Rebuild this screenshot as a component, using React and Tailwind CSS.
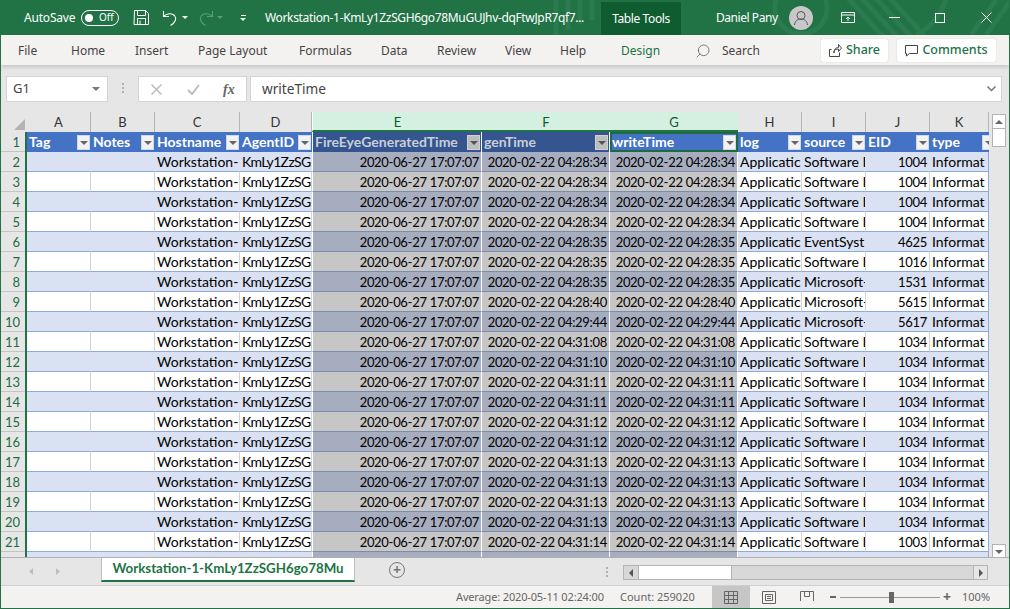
import { Search } from "lucide-react";

const uiFont = "font-['Noto_Sans',sans-serif]";
const cellFont = "font-['Lato',sans-serif]";

// fit squeezes digit-heavy columns, Lato's figures are wider than the sheet font
const cols = [
  { key: "A", name: "Tag", w: "w-[64px]" },
  { key: "B", name: "Notes", w: "w-[64px]" },
  { key: "C", name: "Hostname", w: "w-[85px]" },
  { key: "D", name: "AgentID", w: "w-[72px]", fit: "text-[14px] tracking-[-0.65px]" },
  { key: "E", name: "FireEyeGeneratedTime", w: "w-[170px] border-l border-l-white", sel: true, fit: "text-[13px] tracking-[-0.3px]" },
  { key: "F", name: "genTime", w: "w-[128px]", sel: true, fit: "text-[13px] tracking-[-0.3px]" },
  { key: "G", name: "writeTime", w: "w-[128px]", sel: true, active: true, fit: "text-[13px] tracking-[-0.3px]" },
  { key: "H", name: "log", w: "w-[64px]" },
  { key: "I", name: "source", w: "w-[64px]" },
  { key: "J", name: "EID", w: "w-[64px]", fit: "text-[13px] tracking-[-0.3px]" },
  { key: "K", name: "type", w: "w-[59px]" },
];

const times = ["04:28:34", "04:28:34", "04:28:34", "04:28:34", "04:28:35", "04:28:35", "04:28:35", "04:28:40", "04:29:44", "04:31:08", "04:31:10", "04:31:11", "04:31:11", "04:31:12", "04:31:12", "04:31:13", "04:31:13", "04:31:13", "04:31:13", "04:31:14", "04:31:14"];
const sources = ["Software I", "Software I", "Software I", "Software I", "EventSyst", "Software I", "Microsoft-", "Microsoft-", "Microsoft-", "Software I", "Software I", "Software I", "Software I", "Software I", "Software I", "Software I", "Software I", "Software I", "Software I", "Software I", "Software I"];
const eids = [1004, 1004, 1004, 1004, 4625, 1016, 1531, 5615, 5617, 1034, 1034, 1034, 1034, 1034, 1034, 1034, 1034, 1034, 1034, 1003, 1003];

const tabs = [
  { label: "File", cls: "ml-[17px] w-[53px]" },
  { label: "Home", cls: "w-[64px]" },
  { label: "Insert", cls: "w-[63px]" },
  { label: "Page Layout", cls: "w-[101px]" },
  { label: "Formulas", cls: "w-[82px]" },
  { label: "Data", cls: "w-[56px]" },
  { label: "Review", cls: "w-[68px]" },
  { label: "View", cls: "w-[55px]" },
  { label: "Help", cls: "w-[61px]" },
  { label: "Design", cls: "w-[77px] text-[#217346]" },
];

function FilterBtn({ dim, clip }) {
  return (
    <span className={`absolute top-[3px] flex h-[15px] w-[13px] items-center justify-center border ${clip ? "right-[-6px]" : "right-[1px]"} ${dim ? "border-[#d0d0d0] bg-[#bdbdbd]" : "border-[#d0d7e5] bg-[#f2f2f2]"}`}>
      <span className={`h-0 w-0 border-x-[4px] border-t-[4px] border-x-transparent ${dim ? "border-t-[#555]" : "border-t-[#666]"}`} />
    </span>
  );
}

function HeaderRow() {
  return (
    <div className="flex h-[20px]">
      {cols.map((c) => (
        <div
          key={c.key}
          className={`relative ${c.w} shrink-0 overflow-hidden pl-[2px] text-[14px] leading-[20px] font-bold ${c.sel ? "border-r border-white" : ""} ${c.active ? "bg-[#4472c4] text-white outline-2 -outline-offset-2 outline-[#1f6b3f]" : c.sel ? "bg-[#34558f] text-[#c9cdd6]" : "bg-[#4472c4] text-white"}`}
        >
          {c.name}
          <FilterBtn dim={c.sel && !c.active} clip={c.key === "K"} />
        </div>
      ))}
    </div>
  );
}

function DataRow({ i }) {
  const band = i % 2 === 0;
  const date = "2020-02-22 " + times[i];
  const values = ["", "", "Workstation-", "KmLy1ZzSG", "2020-06-27 17:07:07", date, date, "Applicatic", sources[i], eids[i], "Informat"];
  return (
    <div className="flex h-[20px]">
      {cols.map((c, n) => {
        const right = c.sel || c.key === "J";
        let cell = band ? "bg-[#d9e1f2] border-b-[#8ea9db] border-r-transparent" : "bg-white border-b-[#8ea9db] border-r-[#d4d4d4]";
        if (c.sel) cell = `${band ? "bg-[#a6adbf]" : "bg-[#c6c6c6]"} border-b-[#7c8cab] border-r-white`;
        if (c.key === "K") cell = `${band ? "bg-[#d9e1f2]" : "bg-white"} border-b-[#8ea9db] border-r-[#8ea9db]`;
        return (
          <div
            key={c.key}
            className={`${c.w} shrink-0 overflow-hidden whitespace-nowrap border-r border-b px-[2px] leading-[20px] text-black ${cell} ${c.fit || "text-[14px]"} ${right ? "text-right" : "text-left"}`}
          >
            {values[n]}
          </div>
        );
      })}
    </div>
  );
}

function Sheet() {
  return (
    <div className="relative flex h-[445px] overflow-hidden">
      <div className="flex w-[991px] flex-col">
        <div className={`flex h-[20px] shrink-0 ${cellFont} text-[13px] leading-[20px] text-[#333]`}>
          <div className="relative w-[26px] shrink-0">
            <span className="absolute right-[2px] bottom-[2px] h-0 w-0 border-b-[11px] border-l-[11px] border-b-[#b4b4b4] border-l-transparent" />
          </div>
          {cols.map((c) => (
            <div
              key={c.key}
              className={`${c.w} shrink-0 text-center ${c.sel ? "border-b-2 border-[#217346] bg-[#d3f0e0] text-[#0f5c30]" : "border-r border-[#b6b6b6]"}`}
            >
              {c.key}
            </div>
          ))}
        </div>
        <div className="flex">
          <div className={`w-[26px] shrink-0 border-r-2 border-[#217346] ${cellFont} text-[13px] leading-[20px] text-[#1e6b42]`}>
            {Array.from({ length: 22 }, (_, i) => (
              <div key={i} className="h-[20px] border-b border-[#c4c4c4] pr-[5px] text-right">
                {i + 1}
              </div>
            ))}
          </div>
          <div className={`${cellFont} relative flex flex-col`}>
            <HeaderRow />
            {times.map((_, i) => (
              <DataRow key={i} i={i} />
            ))}
          </div>
        </div>
      </div>
      <div className="flex w-[14px] shrink-0 flex-col pt-[2px]">
        <div className="flex h-[15px] items-center justify-center border border-[#b4b4b4] bg-white">
          <span className="h-0 w-0 border-x-[4px] border-b-[4px] border-x-transparent border-b-[#666]" />
        </div>
        <div className="h-[18px] border-x border-b border-[#b4b4b4] bg-white" />
        <div className="flex-1" />
        <div className="mb-[-2px] flex h-[15px] items-center justify-center border border-[#b4b4b4] bg-white">
          <span className="h-0 w-0 border-x-[4px] border-t-[4px] border-x-transparent border-t-[#666]" />
        </div>
      </div>
    </div>
  );
}

function TitleBar() {
  return (
    <div className={`relative flex h-[35px] shrink-0 items-center overflow-hidden bg-[#217346] ${uiFont} text-[12px] text-white`}>
      <svg className="absolute top-0 left-[545px]" width="465" height="35" viewBox="0 0 465 35" fill="none" stroke="#2b7a50" strokeWidth="5">
        <path d="M10 0v35M22 0v30M34 0v24M46 0v20" />
        <circle cx="255" cy="8" r="26" />
        <path d="M300 -4l40 44M314 -4l40 44M328 -4l40 44M342 -4l40 44" />
        <path d="M400 0c-6 16 -16 28 -30 35" />
        <path d="M425 35l25 -35M440 35l25 -35" />
      </svg>
      <span className="relative ml-[23px] w-[52px] tracking-[-0.200px]">AutoSave</span>
      <div className="relative ml-[5px] flex h-[16px] w-[38px] items-center rounded-full border border-white pl-[3px] text-[10px]">
        <span className="h-[8px] w-[8px] rounded-full bg-white" />
        <span className="ml-[6px]">Off</span>
      </div>
      <svg className="relative ml-[14px]" width="17" height="17" viewBox="0 0 17 17" fill="none" stroke="white" strokeWidth="1">
        <path d="M1.5 1.5h11l3 3v11h-14.500z" />
        <path d="M4.500 1.500v5h8v-5M4.500 15.500v-6h8v6M7 11.500v4" />
      </svg>
      <svg className="relative ml-[12px]" width="16" height="18" viewBox="0 0 16 18" fill="none" stroke="white" strokeWidth="1.100">
        <path d="M1.500 2v5.500h5.500M1.500 7.500c3 -3 8 -4 11 -1c2.500 3 1 7 -4 10" />
      </svg>
      <span className="relative ml-[4px] h-0 w-0 border-x-[3px] border-t-[3px] border-x-transparent border-t-white" />
      <svg className="relative ml-[10px]" width="16" height="18" viewBox="0 0 16 18" fill="none" stroke="#5b9c7b" strokeWidth="1.100">
        <path d="M14.500 2v5.500h-5.500M14.500 7.500c-3 -3 -8 -4 -11 -1c-2.500 3 -1 7 4 10" />
      </svg>
      <span className="relative ml-[3px] h-0 w-0 border-x-[3px] border-t-[3px] border-x-transparent border-t-[#5b9c7b]" />
      <div className="relative ml-[17px] flex w-[6px] flex-col items-center gap-[2px]">
        <span className="h-px w-[5px] bg-white" />
        <span className="h-0 w-0 border-x-[3px] border-t-[3px] border-x-transparent border-t-white" />
      </div>
      <span className="relative ml-[19px] w-[336px] tracking-[-0.350px] whitespace-nowrap">Workstation-1-KmLy1ZzSGH6go78MuGUJhv-dqFtwJpR7qf7...</span>
      <div className="relative mt-[2px] flex h-[33px] w-[80px] items-center justify-center bg-[#0f5c30] tracking-[-0.400px]">Table Tools</div>
      <span className="relative ml-[35px] w-[62px] tracking-[-0.450px] whitespace-nowrap">Daniel Pany</span>
      <div className="relative ml-[11px] flex h-[24px] w-[24px] items-center justify-center rounded-full bg-[#c8c8c8]">
        <svg width="16" height="16" viewBox="0 0 16 16" fill="none" stroke="#555" strokeWidth="1">
          <circle cx="8" cy="5.500" r="4" />
          <path d="M1.500 15c.5 -4 3 -6 6.500 -6s6 2 6.500 6" />
        </svg>
      </div>
      <svg className="relative ml-[28px]" width="14" height="12" viewBox="0 0 14 12" fill="none" stroke="white">
        <path d="M.500 .500h13v10h-13zM.500 3h13M7 9v-4M5 7l2 -2l2 2" />
      </svg>
      <span className="relative ml-[34px] h-px w-[11px] bg-white" />
      <span className="relative ml-[35px] h-[10px] w-[10px] border border-white" />
      <svg className="relative ml-[36px]" width="11" height="11" viewBox="0 0 11 11" stroke="white">
        <path d="M.500 .500l10 10M10.500 .500l-10 10" />
      </svg>
    </div>
  );
}

function Ribbon() {
  return (
    <div className={`flex h-[30px] shrink-0 items-center bg-[#f3f2f1] pt-[1px] ${uiFont} text-[12px] text-[#444] shadow-[0_2px_4px_rgba(0,0,0,0.15)]`}>
      {tabs.map((t) => (
        <span key={t.label} className={`shrink-0 ${t.cls}`}>
          {t.label}
        </span>
      ))}
      <Search size={16} strokeWidth={1.100} className="ml-[-3px] -scale-x-100 text-[#555]" />
      <span className="ml-[11px]">Search</span>
      <div className="ml-[61px] flex h-[23px] w-[67px] items-center justify-center gap-[4px] rounded-[2px] bg-white text-[12.500px] font-medium text-[#217346] shadow-[0_0_1px_rgba(0,0,0,0.3)]">
        <svg width="13" height="13" viewBox="0 0 13 13" fill="none" stroke="#444">
          <path d="M2.500 5.500h-2v7h10v-4M5 9c0 -4 2 -5.500 4.500 -5.500v-3l3 3.500l-3 3.500v-2.500c-2 0 -3.500 .5 -4.500 2z" />
        </svg>
        Share
      </div>
      <div className="ml-[9px] flex h-[23px] w-[99px] items-center justify-center gap-[4px] rounded-[2px] bg-white text-[12.500px] font-medium text-[#217346] shadow-[0_0_1px_rgba(0,0,0,0.3)]">
        <svg width="13" height="13" viewBox="0 0 13 13" fill="none" stroke="#444">
          <path d="M.500 1.500h12v8h-8l-3 2.500v-2.500h-1z" />
        </svg>
        Comments
      </div>
    </div>
  );
}

function FormulaBar() {
  return (
    <div className={`flex h-[47px] shrink-0 items-start pt-[11px] pl-[5px] ${uiFont} text-[13px] text-[#444]`}>
      <div className="flex h-[26px] w-[102px] items-center justify-between border border-[#d4d4d4] bg-white pr-[7px] pl-[6px]">
        G1
        <span className="h-0 w-0 border-x-[4px] border-t-[4px] border-x-transparent border-t-[#777]" />
      </div>
      <div className="mt-[7px] ml-[14px] flex flex-col gap-[2px]">
        <span className="h-[2px] w-[2px] bg-[#b0b0b0]" />
        <span className="h-[2px] w-[2px] bg-[#b0b0b0]" />
        <span className="h-[2px] w-[2px] bg-[#b0b0b0]" />
      </div>
      <div className="ml-[14px] flex h-[26px] w-[109px] items-center border border-[#d4d4d4] bg-white">
        <svg className="ml-[12px]" width="11" height="11" viewBox="0 0 11 11" stroke="#bdbdbd" strokeWidth="1.500">
          <path d="M.500 .500l10 10M10.500 .500l-10 10" />
        </svg>
        <svg className="ml-[25px]" width="13" height="11" viewBox="0 0 13 11" fill="none" stroke="#bdbdbd" strokeWidth="2">
          <path d="M1 6l4 4l7 -9" />
        </svg>
        <span className="ml-[23px] font-['Liberation_Serif',serif] text-[14px] font-bold text-[#666] italic">fx</span>
      </div>
      <div className="ml-[3px] flex h-[26px] w-[752px] items-center justify-between border border-[#d4d4d4] bg-white pr-[5px] pl-[11px] text-[13.600px]">
        writeTime
        <svg width="9" height="6" viewBox="0 0 9 6" fill="none" stroke="#777" strokeWidth="1.500">
          <path d="M.500 .500l4 4l4 -4" />
        </svg>
      </div>
    </div>
  );
}

function TabBar() {
  return (
    <div className="flex h-[29px] shrink-0 items-start border-t border-b border-t-[#b0b0b0] border-b-[#d0d0d0]">
      <svg className="mt-[10px] ml-[27px]" width="60" height="9" viewBox="0 0 60 9" fill="#bdbdbd">
        <path d="M5 0v7l-4 -3.500zM28 0v7l4 -3.500z" />
      </svg>
      <div className={`ml-[13px] flex h-[24px] w-[254px] items-center justify-center border-x border-b-2 border-x-[#c0c0c0] border-b-[#217346] bg-white ${cellFont} text-[13.300px] font-bold text-[#217346]`}>
        Workstation-1-KmLy1ZzSGH6go78Mu
      </div>
      <span className="mt-[4px] ml-[34px] flex h-[16px] w-[16px] items-center justify-center rounded-full border border-[#777] text-[14px] leading-none font-bold text-[#777]">+</span>
      <div className="mt-[9px] ml-[201px] flex flex-col gap-[2px]">
        <span className="h-[2px] w-[2px] bg-[#b0b0b0]" />
        <span className="h-[2px] w-[2px] bg-[#b0b0b0]" />
        <span className="h-[2px] w-[2px] bg-[#b0b0b0]" />
      </div>
      <div className="mt-[7px] ml-[15px] flex h-[15px] w-[365px] items-stretch border border-[#b4b4b4] bg-[#d8d8d8]">
        <div className="flex w-[14px] items-center justify-center">
          <span className="h-0 w-0 border-y-[4px] border-r-[4px] border-y-transparent border-r-[#555]" />
        </div>
        <div className="w-[94px] border-x border-[#b4b4b4] bg-white" />
        <div className="flex-1" />
        <div className="flex w-[14px] items-center justify-center border-l border-[#b4b4b4] bg-[#e6e6e6]">
          <span className="h-0 w-0 border-y-[4px] border-l-[4px] border-y-transparent border-l-[#555]" />
        </div>
      </div>
    </div>
  );
}

function StatusBar() {
  return (
    <div className={`flex h-[22px] shrink-0 items-center bg-[#f3f2f1] ${uiFont} text-[11px] text-[#666]`}>
      <span className="ml-[455px] w-[164px] tracking-[-0.150px] whitespace-nowrap">Average: 2020-05-11 02:24:00</span>
      <span className="w-[92px] whitespace-nowrap">Count: 259020</span>
      <div className="flex h-[22px] w-[38px] items-center justify-center bg-[#c6c6c6]">
        <svg width="14" height="13" viewBox="0 0 14 13" fill="none" stroke="#666">
          <path d="M.500 .500h13v12h-13zM.500 4.500h13M.500 8.500h13M4.500 .500v12M9.500 .500v12" />
        </svg>
      </div>
      <svg className="ml-[12px]" width="14" height="13" viewBox="0 0 14 13" fill="none" stroke="#666">
        <path d="M.500 .500h13v12h-13zM3.500 3.500h7v6h-7zM5 5.500h4M5 7.500h4" />
      </svg>
      <svg className="ml-[24px]" width="14" height="13" viewBox="0 0 14 13" fill="none" stroke="#666">
        <path d="M.500 10v-9.500h13v9.500M4.500 .500v5h5v-5" />
      </svg>
      <span className="ml-[16px] h-[2px] w-[6px] bg-[#666]" />
      <div className="relative ml-[4px] flex h-[11px] w-[100px] items-center">
        <span className="h-px w-full bg-[#999]" />
        <span className="absolute left-[49px] h-[11px] w-[5px] bg-[#666]" />
      </div>
      <span className="ml-[3px] text-[14px] leading-none font-bold">+</span>
      <span className="ml-[11px]">100%</span>
    </div>
  );
}

export default function App() {
  return (
    <div className="flex h-[609px] w-[1010px] flex-col overflow-hidden border-x border-b border-[#217346] bg-[#e6e6e6]">
      <TitleBar />
      <Ribbon />
      <FormulaBar />
      <Sheet />
      <TabBar />
      <StatusBar />
    </div>
  );
}
